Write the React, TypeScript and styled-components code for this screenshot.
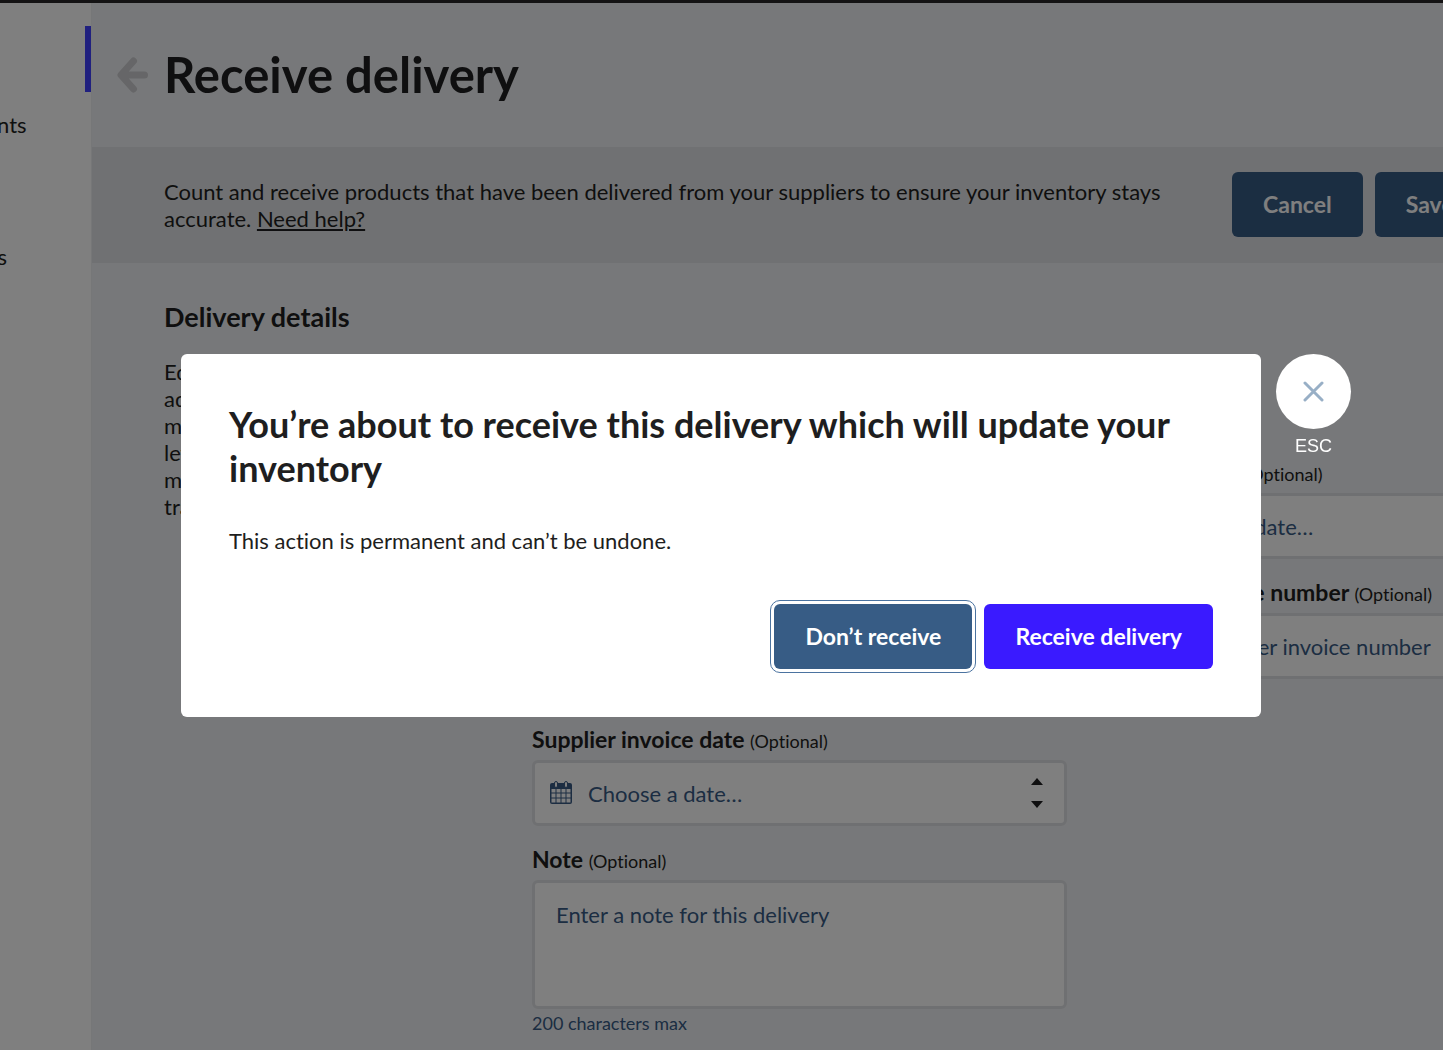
import React from "react";
import styled, { createGlobalStyle, css } from "styled-components";

const GlobalStyle = createGlobalStyle`
  *, *::before, *::after { box-sizing: border-box; }
  body {
    margin: 0;
    overflow: hidden;
    background: #eff1f4;
    color: #1e1e20;
    font-family: Lato, "Liberation Sans", sans-serif;
    font-size: 22px;
    line-height: 27px;
    font-variant-ligatures: none;
  }
  h1, h2, p, ul { margin: 0; padding: 0; }
  button, input, textarea { font: inherit; color: inherit; font-variant-ligatures: none; }
`;

const Page = styled.div`
  display: flex;
  flex-direction: column;
  height: 100vh;
  overflow: hidden;
`;

const TopBar = styled.header`
  flex: none;
  height: 3px;
  background: #282729;
`;

const Body = styled.div`
  flex: 1;
  display: flex;
  min-height: 0;
`;

const Sidebar = styled.aside`
  flex: none;
  width: 91px;
  overflow: hidden;
  display: flex;
  justify-content: flex-end;
  background: #fff;
`;

const SideNav = styled.nav`
  flex: none;
  width: 228px;
  padding-top: 23px;
`;

const SideLink = styled.a<{ $active?: boolean }>`
  display: flex;
  align-items: center;
  height: 66px;
  padding: 0 0 2px 40px;
  color: inherit;
  text-decoration: none;
  border-right: 6px solid ${(p) => (p.$active ? "#4141ff" : "transparent")};
`;

const Main = styled.main`
  flex: 1;
  min-width: 0;
  overflow: hidden;
  border-left: 1px solid #eceef1;
`;

const PageHeader = styled.div`
  display: flex;
  align-items: center;
  gap: 16px;
  height: 144px;
  padding: 0 24px;
`;

const BackButton = styled.button`
  display: flex;
  padding: 0;
  border: 0;
  background: none;
  color: #cccdd0;
`;

const PageTitle = styled.h1`
  padding-bottom: 2px;
  font-size: 49px;
  line-height: 60px;
`;

const ActionBar = styled.section`
  display: flex;
  align-items: center;
  gap: 24px;
  padding: 25px 72px 26px;
  background: #e1e3e6;
`;

const ActionText = styled.p`
  flex: none;
  width: 1044px;
`;

const HelpLink = styled.a`
  color: inherit;
`;

const ButtonRow = styled.div<{ $end?: boolean }>`
  display: flex;
  flex: none;
  gap: 12px;
  ${(p) => p.$end && css`justify-content: flex-end;`}
`;

const Button = styled.button<{ $primary?: boolean }>`
  height: 65px;
  padding: 0 31px;
  border: 0;
  border-radius: 6px;
  background: ${(p) => (p.$primary ? "#3a1aff" : "#375c85")};
  color: #fff;
  font-size: 23px;
  font-weight: 700;
  white-space: nowrap;
  &:focus {
    outline: 1px solid #4b73a0;
    outline-offset: 3px;
  }
`;

const Details = styled.section`
  padding: 36px 72px;
`;

const SectionTitle = styled.h2`
  margin-bottom: 23px;
  font-size: 27px;
  line-height: 36px;
`;

const DetailsGrid = styled.div`
  display: grid;
  grid-template-columns: 344px 1106px;
  gap: 24px;
`;

const Fields = styled.div`
  display: grid;
  grid-template-columns: 1fr 1fr;
  align-items: start;
  gap: 20px 36px;
`;

const Summary = styled.div`
  grid-column: 1 / -1;
  height: 81px;
`;

const Field = styled.div<{ $newRow?: boolean }>`
  display: flex;
  flex-direction: column;
  ${(p) => p.$newRow && css`grid-column: 1;`}
`;

const Label = styled.label`
  margin-bottom: 8px;
  font-size: 23px;
  font-weight: 700;
  line-height: 26px;
`;

const Optional = styled.span`
  font-size: 18px;
  font-weight: 400;
  line-height: 18px;
`;

const Control = styled.div`
  display: flex;
  align-items: center;
  height: 66px;
  border: 3px solid #dfe0e4;
  border-radius: 6px;
  background: #fff;
`;

const placeholder = css`
  &::placeholder { color: #385b85; opacity: 1; }
`;

const Input = styled.input<{ $afterIcon?: boolean }>`
  flex: 1;
  min-width: 0;
  height: 100%;
  padding: 0 ${(p) => (p.$afterIcon ? 16 : 21)}px;
  border: 0;
  background: none;
  outline: none;
  ${placeholder}
`;

const TextArea = styled.textarea`
  height: 129px;
  padding: 18px 21px;
  border: 3px solid #dfe0e4;
  border-radius: 6px;
  background: #fff;
  resize: none;
  ${placeholder}
`;

const Hint = styled.p`
  padding-top: 2px;
  color: #385b85;
  font-size: 18px;
  line-height: 25px;
`;

const CalendarIcon = styled.svg`
  flex: none;
  margin-left: 15px;
  color: #385b85;
`;

const Stepper = styled.div`
  display: flex;
  flex-direction: column;
  gap: 16px;
  margin-right: 21px;
`;

const StepButton = styled.button`
  display: flex;
  padding: 0;
  border: 0;
  background: none;
`;

const Overlay = styled.div`
  position: fixed;
  inset: 0;
  display: flex;
  align-items: center;
  justify-content: center;
  padding: 21px 182px 0 181px;
  background: rgba(0, 0, 0, 0.5);
`;

const Dialog = styled.div`
  position: relative;
  width: 100%;
  max-width: 1080px;
  padding: 48px;
  border-radius: 6px;
  background: #fff;
`;

const DialogTitle = styled.h2`
  margin-bottom: 37px;
  font-size: 36px;
  line-height: 44px;
`;

const DialogText = styled.p`
  margin-bottom: 50px;
`;

const CloseButton = styled.button`
  position: absolute;
  top: 0;
  left: calc(100% + 15px);
  display: flex;
  flex-direction: column;
  align-items: center;
  gap: 7px;
  padding: 0;
  border: 0;
  background: none;
  color: #fff;
  font-family: "Liberation Sans", Arial, sans-serif;
  font-size: 18px;
  line-height: 21px;
`;

const CloseCircle = styled.span`
  display: flex;
  align-items: center;
  justify-content: center;
  width: 75px;
  height: 75px;
  border-radius: 50%;
  background: #fff;
`;

function Calendar() {
  return (
    <CalendarIcon width="22" height="24" viewBox="0 0 22 24" fill="none" aria-hidden="true">
      <path d="M2 2h18a2 2 0 0 1 2 2v17a2 2 0 0 1-2 2H2a2 2 0 0 1-2-2V4a2 2 0 0 1 2-2z" fill="currentColor" />
      <path
        d="M1.5 8h4v3.5h-4zM6.5 8h4v3.5h-4zM11.5 8h4v3.5h-4zM16.5 8h4v3.5h-4zM1.5 12.5h4v4h-4zM6.5 12.5h4v4h-4zM11.5 12.5h4v4h-4zM16.5 12.5h4v4h-4zM1.5 17.5h4v4h-4zM6.5 17.5h4v4h-4zM11.5 17.5h4v4h-4zM16.5 17.5h4v4h-4z"
        fill="#fff"
      />
      <rect x="4.5" y="0.5" width="3" height="6" rx="1.5" fill="#fff" stroke="currentColor" />
      <rect x="14.5" y="0.5" width="3" height="6" rx="1.5" fill="#fff" stroke="currentColor" />
    </CalendarIcon>
  );
}

function DateField({ id, label, text, newRow }: { id: string; label: string; text: string; newRow?: boolean }) {
  return (
    <Field $newRow={newRow}>
      <Label htmlFor={id}>
        {label} <Optional>(Optional)</Optional>
      </Label>
      <Control>
        <Calendar />
        <Input id={id} $afterIcon placeholder={text} />
        <Stepper>
          <StepButton type="button" aria-label="Next day">
            <svg width="12" height="7" viewBox="0 0 12 7"><path d="M0 7 6 0l6 7z" fill="#1e1e20" /></svg>
          </StepButton>
          <StepButton type="button" aria-label="Previous day">
            <svg width="12" height="7" viewBox="0 0 12 7"><path d="M0 0h12L6 7z" fill="#1e1e20" /></svg>
          </StepButton>
        </Stepper>
      </Control>
    </Field>
  );
}

function TextField({ id, label, text, hint }: { id: string; label: string; text: string; hint?: string }) {
  return (
    <Field>
      <Label htmlFor={id}>
        {label} <Optional>(Optional)</Optional>
      </Label>
      <Control>
        <Input id={id} placeholder={text} />
      </Control>
      {hint && <Hint>{hint}</Hint>}
    </Field>
  );
}

const navItems = ["Products", "Stock counts", "Suppliers", "Stocktakes"];

export default function App() {
  return (
    <>
      <GlobalStyle />
      <Page>
        <TopBar />
        <Body>
          <Sidebar>
            <SideNav>
              {navItems.map((item, i) => (
                <SideLink key={item} href="#" $active={i === 0}>{item}</SideLink>
              ))}
            </SideNav>
          </Sidebar>
          <Main>
            <PageHeader>
              <BackButton type="button" aria-label="Back">
                <svg width="32" height="36" viewBox="0 0 32 36" fill="none" stroke="currentColor" strokeWidth="7" strokeLinecap="round" strokeLinejoin="round">
                  <path d="M17.5 4 5 18l12.5 14M6 18h22.5" />
                </svg>
              </BackButton>
              <PageTitle>Receive delivery</PageTitle>
            </PageHeader>
            <ActionBar>
              <ActionText>
                Count and receive products that have been delivered from your suppliers to ensure your inventory stays
                accurate. <HelpLink href="#">Need help?</HelpLink>
              </ActionText>
              <ButtonRow>
                <Button type="button">Cancel</Button>
                <Button type="button">Save</Button>
              </ButtonRow>
            </ActionBar>
            <Details>
              <SectionTitle>Delivery details</SectionTitle>
              <DetailsGrid>
                <p>
                  Edit the delivery details and<br />
                  add a reference number to<br />
                  make sure that your stock<br />
                  levels are accurate. A note<br />
                  may also help your team to<br />
                  track this delivery.
                </p>
                <Fields>
                  <Summary />
                  <TextField id="reference" label="Reference number" text="Enter a reference number" />
                  <DateField id="delivery-date" label="Delivery date" text="Choose a date…" />
                  <TextField id="name" label="Delivery name" text="Enter a delivery name" hint="50 characters max" />
                  <TextField id="invoice" label="Supplier invoice number" text="Enter a supplier invoice number" />
                  <DateField id="invoice-date" label="Supplier invoice date" text="Choose a date…" newRow />
                  <Field $newRow>
                    <Label htmlFor="note">
                      Note <Optional>(Optional)</Optional>
                    </Label>
                    <TextArea id="note" placeholder="Enter a note for this delivery" />
                    <Hint>200 characters max</Hint>
                  </Field>
                </Fields>
              </DetailsGrid>
            </Details>
          </Main>
        </Body>
      </Page>
      <Overlay>
        <Dialog role="dialog" aria-modal="true" aria-labelledby="dialog-title">
          <DialogTitle id="dialog-title">
            You’re about to receive this delivery which will update your inventory
          </DialogTitle>
          <DialogText>This action is permanent and can’t be undone.</DialogText>
          <ButtonRow $end>
            <Button type="button" autoFocus>Don’t receive</Button>
            <Button type="button" $primary>Receive delivery</Button>
          </ButtonRow>
          <CloseButton type="button">
            <CloseCircle>
              <svg width="21" height="21" viewBox="0 0 21 21" fill="none" stroke="#98afc6" strokeWidth="3" strokeLinecap="round" aria-hidden="true">
                <path d="M2 2l17 17M19 2 2 19" />
              </svg>
            </CloseCircle>
            ESC
          </CloseButton>
        </Dialog>
      </Overlay>
    </>
  );
}
